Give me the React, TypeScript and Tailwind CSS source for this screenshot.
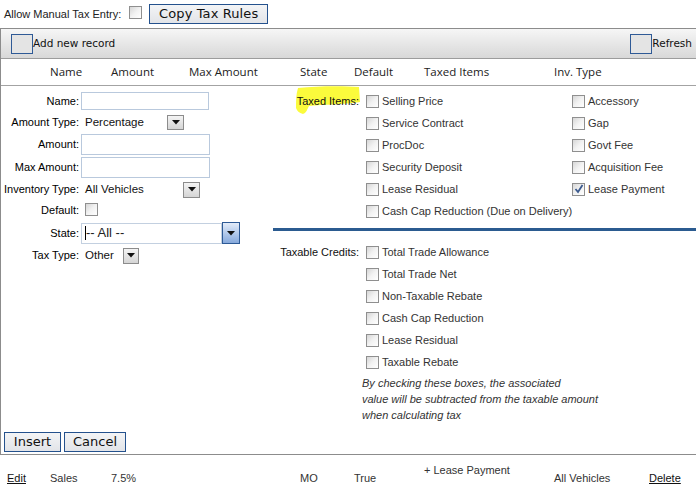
import React from "react";

const Check = ({ checked = false }: { checked?: boolean }) => (
  <span className="relative inline-block w-[13px] h-[13px] shrink-0 border border-[#8f8f8f] bg-gradient-to-br from-[#d6d6d6] via-[#f2f2f2] to-white">
    {checked && (
      <svg className="absolute left-[1px] top-[0px]" width="10" height="10" viewBox="0 0 10 10">
        <path d="M1.5 5 L4 8 L8.5 1" fill="none" stroke="#3b5a8e" strokeWidth="1.8" />
      </svg>
    )}
  </span>
);

const Arrow = ({ w, h, blue = false }: { w: number; h: number; blue?: boolean }) => (
  <span
    className={
      "flex items-center justify-center shrink-0 border " +
      (blue
        ? "border-[#2d5a96] bg-gradient-to-b from-[#e3ecf9] to-[#86a9dc]"
        : "border-[#8c8c8c] bg-gradient-to-b from-[#f4f4f4] to-[#d5d5d5]")
    }
    style={{ width: w, height: h }}
  >
    <svg width="8" height="5" viewBox="0 0 8 5">
      <path d="M0 0 L8 0 L4 4.5 Z" fill="#111" />
    </svg>
  </span>
);

const Item = ({ label, checked = false }: { label: string; checked?: boolean }) => (
  <div className="flex items-center gap-[3px] text-[11px] text-[#333] whitespace-nowrap">
    <Check checked={checked} />
    <span>{label}</span>
  </div>
);

const FormRow = ({ label, h, children }: { label: string; h: number; children: React.ReactNode }) => (
  <div className="flex items-center" style={{ height: h }}>
    <div className="w-[78px] text-right text-[11px] text-black whitespace-nowrap">{label}</div>
    <div className="ml-[2px] flex items-center">{children}</div>
  </div>
);

const Input = ({ w, h }: { w: number; h: number }) => (
  <div className="border border-[#b9c9dd] bg-white" style={{ width: w, height: h }} />
);

export default function App() {
  const taxedLeft = ["Selling Price", "Service Contract", "ProcDoc", "Security Deposit", "Lease Residual", "Cash Cap Reduction (Due on Delivery)"];
  const taxedRight: (string | null)[] = ["Accessory", "Gap", "Govt Fee", "Acquisition Fee", "Lease Payment", null];
  const credits = ["Total Trade Allowance", "Total Trade Net", "Non-Taxable Rebate", "Cash Cap Reduction", "Lease Residual", "Taxable Rebate"];

  return (
    <div className="w-[696px] h-[493px] bg-white overflow-hidden font-['Liberation_Sans',Arial,sans-serif] text-black">
      {/* top row */}
      <div className="h-[28px] flex items-center pl-[4px]">
        <span className="text-[11px] text-[#222]">Allow Manual Tax Entry:</span>
        <span className="ml-[8px]"><Check /></span>
        <div className="ml-[7px] w-[119px] h-[20px] border border-[#24518d] bg-gradient-to-b from-[#f3f4f6] to-[#e2e4e8] flex items-center justify-center text-[13px] font-['DejaVu_Sans',sans-serif] text-[#111] tracking-[0.1px]">
          Copy Tax Rules
        </div>
      </div>

      {/* panel */}
      <div className="border-t border-l border-b border-[#8c8c8c]">
        {/* toolbar */}
        <div className="h-[30px] border-b border-[#9c9c9c] bg-gradient-to-b from-[#f6f6f6] to-[#d8d8d8] flex items-center justify-between">
          <div className="flex items-center pl-[10px]">
            <span className="w-[22px] h-[20px] border border-[#2f5a96] bg-[#e4e4e4]" />
            <span className="font-['DejaVu_Sans',sans-serif] text-[10.5px] text-[#111]">Add new record</span>
          </div>
          <div className="flex items-center pr-[4px]">
            <span className="w-[22px] h-[20px] border border-[#2f5a96] bg-[#e4e4e4]" />
            <span className="font-['DejaVu_Sans',sans-serif] text-[10.5px] text-[#111]">Refresh</span>
          </div>
        </div>

        {/* header */}
        <div className="h-[27px] border-b border-[#a3a3a3] bg-white flex items-center pl-[49px] text-[11.5px] font-['Open_Sans',sans-serif] text-[#222]">
          <span className="w-[61px]">Name</span>
          <span className="w-[78px]">Amount</span>
          <span className="w-[111px]">Max Amount</span>
          <span className="w-[54px]">State</span>
          <span className="w-[70px]">Default</span>
          <span className="w-[130px]">Taxed Items</span>
          <span>Inv. Type</span>
        </div>

        {/* form area */}
        <div className="flex">
          <div className="w-[272px] pt-[4px]">
            <FormRow label="Name:" h={22}>
              <Input w={128} h={18} />
            </FormRow>
            <FormRow label="Amount Type:" h={21}>
              <div className="w-[103px] h-[17px] flex items-center justify-between">
                <span className="pl-[4px] text-[11.5px] text-[#111]">Percentage</span>
                <Arrow w={17} h={15} />
              </div>
            </FormRow>
            <FormRow label="Amount:" h={23}>
              <Input w={129} h={21} />
            </FormRow>
            <FormRow label="Max Amount:" h={23}>
              <Input w={129} h={21} />
            </FormRow>
            <FormRow label="Inventory Type:" h={21}>
              <div className="w-[119px] h-[17px] flex items-center justify-between">
                <span className="pl-[4px] text-[11.5px] text-[#111]">All Vehicles</span>
                <Arrow w={17} h={16} />
              </div>
            </FormRow>
            <FormRow label="Default:" h={21}>
              <span className="ml-[4px]"><Check /></span>
            </FormRow>
            <FormRow label="State:" h={24}>
              <div className="flex items-center">
                <div className="w-[141px] h-[21px] border border-[#c3d0e0] flex items-center pl-[3px]">
                  <span className="w-px h-[14px] bg-black" />
                  <span className="text-[13px] text-[#222]">-- All --</span>
                </div>
                <Arrow w={18} h={22} blue />
              </div>
            </FormRow>
            <FormRow label="Tax Type:" h={21}>
              <div className="w-[58px] h-[17px] flex items-center justify-between">
                <span className="pl-[4px] text-[11.5px] text-[#111]">Other</span>
                <Arrow w={16} h={16} />
              </div>
            </FormRow>
          </div>

          <div className="flex-1 pt-[4px]">
            {taxedLeft.map((l, i) => (
              <div key={l} className="flex items-center h-[22px]">
                <div className="relative w-[86px] text-right text-[11px] text-[#111]">
                  {i === 0 && (
                    <>
                      <svg className="absolute left-0 top-[-7px]" width="90" height="32" viewBox="0 0 90 32">
                        <path
                          d="M25 2 C45 0 70 0 86 1 L87 16 C70 19 50 18 36 20 C34 24 33 27 30 28 C26 27 24 25 23 22 C23 15 23 8 25 2 Z"
                          fill="#fbfb3c"
                        />
                      </svg>
                      <span className="relative">Taxed Items:</span>
                    </>
                  )}
                </div>
                <div className="ml-[7px] w-[206px] shrink-0">
                  <Item label={l} />
                </div>
                <div>{taxedRight[i] && <Item label={taxedRight[i] as string} checked={taxedRight[i] === "Lease Payment"} />}</div>
              </div>
            ))}
            <div className="mt-[6px] h-[3px] bg-[#2b5b90]" />
            <div className="mt-[10px]">
              {credits.map((l, i) => (
                <div key={l} className="flex items-center h-[22px]">
                  <div className="w-[86px] text-right text-[11px] text-[#111] whitespace-nowrap">{i === 0 ? "Taxable Credits:" : ""}</div>
                  <div className="ml-[7px]">
                    <Item label={l} />
                  </div>
                </div>
              ))}
            </div>
            <div className="pl-[89px] pt-[2px] text-[11px] italic leading-[16px] text-[#333]">
              <div>By checking these boxes, the associated</div>
              <div>value will be subtracted from the taxable amount</div>
              <div>when calculating tax</div>
            </div>
          </div>
        </div>

        {/* buttons */}
        <div className="flex items-center gap-[3px] pl-[3px] pt-[9px] pb-[2px] font-['DejaVu_Sans',sans-serif] text-[13px] text-[#111]">
          <div className="w-[57px] h-[20px] border border-[#24518d] bg-gradient-to-b from-[#f3f4f6] to-[#e2e4e8] flex items-center justify-center">Insert</div>
          <div className="w-[62px] h-[20px] border border-[#24518d] bg-gradient-to-b from-[#f3f4f6] to-[#e2e4e8] flex items-center justify-center">Cancel</div>
        </div>
      </div>

      {/* bottom row */}
      <div className="h-[38px] flex items-start pt-[7px] text-[11px] text-[#333]">
        <span className="w-[50px] pl-[7px] mt-[8px] underline text-[#111]">Edit</span>
        <span className="w-[61px] mt-[8px]">Sales</span>
        <span className="w-[189px] mt-[8px]">7.5%</span>
        <span className="w-[54px] mt-[8px]">MO</span>
        <span className="w-[70px] mt-[8px]">True</span>
        <span className="w-[130px]">+ Lease Payment</span>
        <span className="w-[95px] mt-[8px]">All Vehicles</span>
        <span className="mt-[8px] underline text-[#111]">Delete</span>
      </div>
    </div>
  );
}
